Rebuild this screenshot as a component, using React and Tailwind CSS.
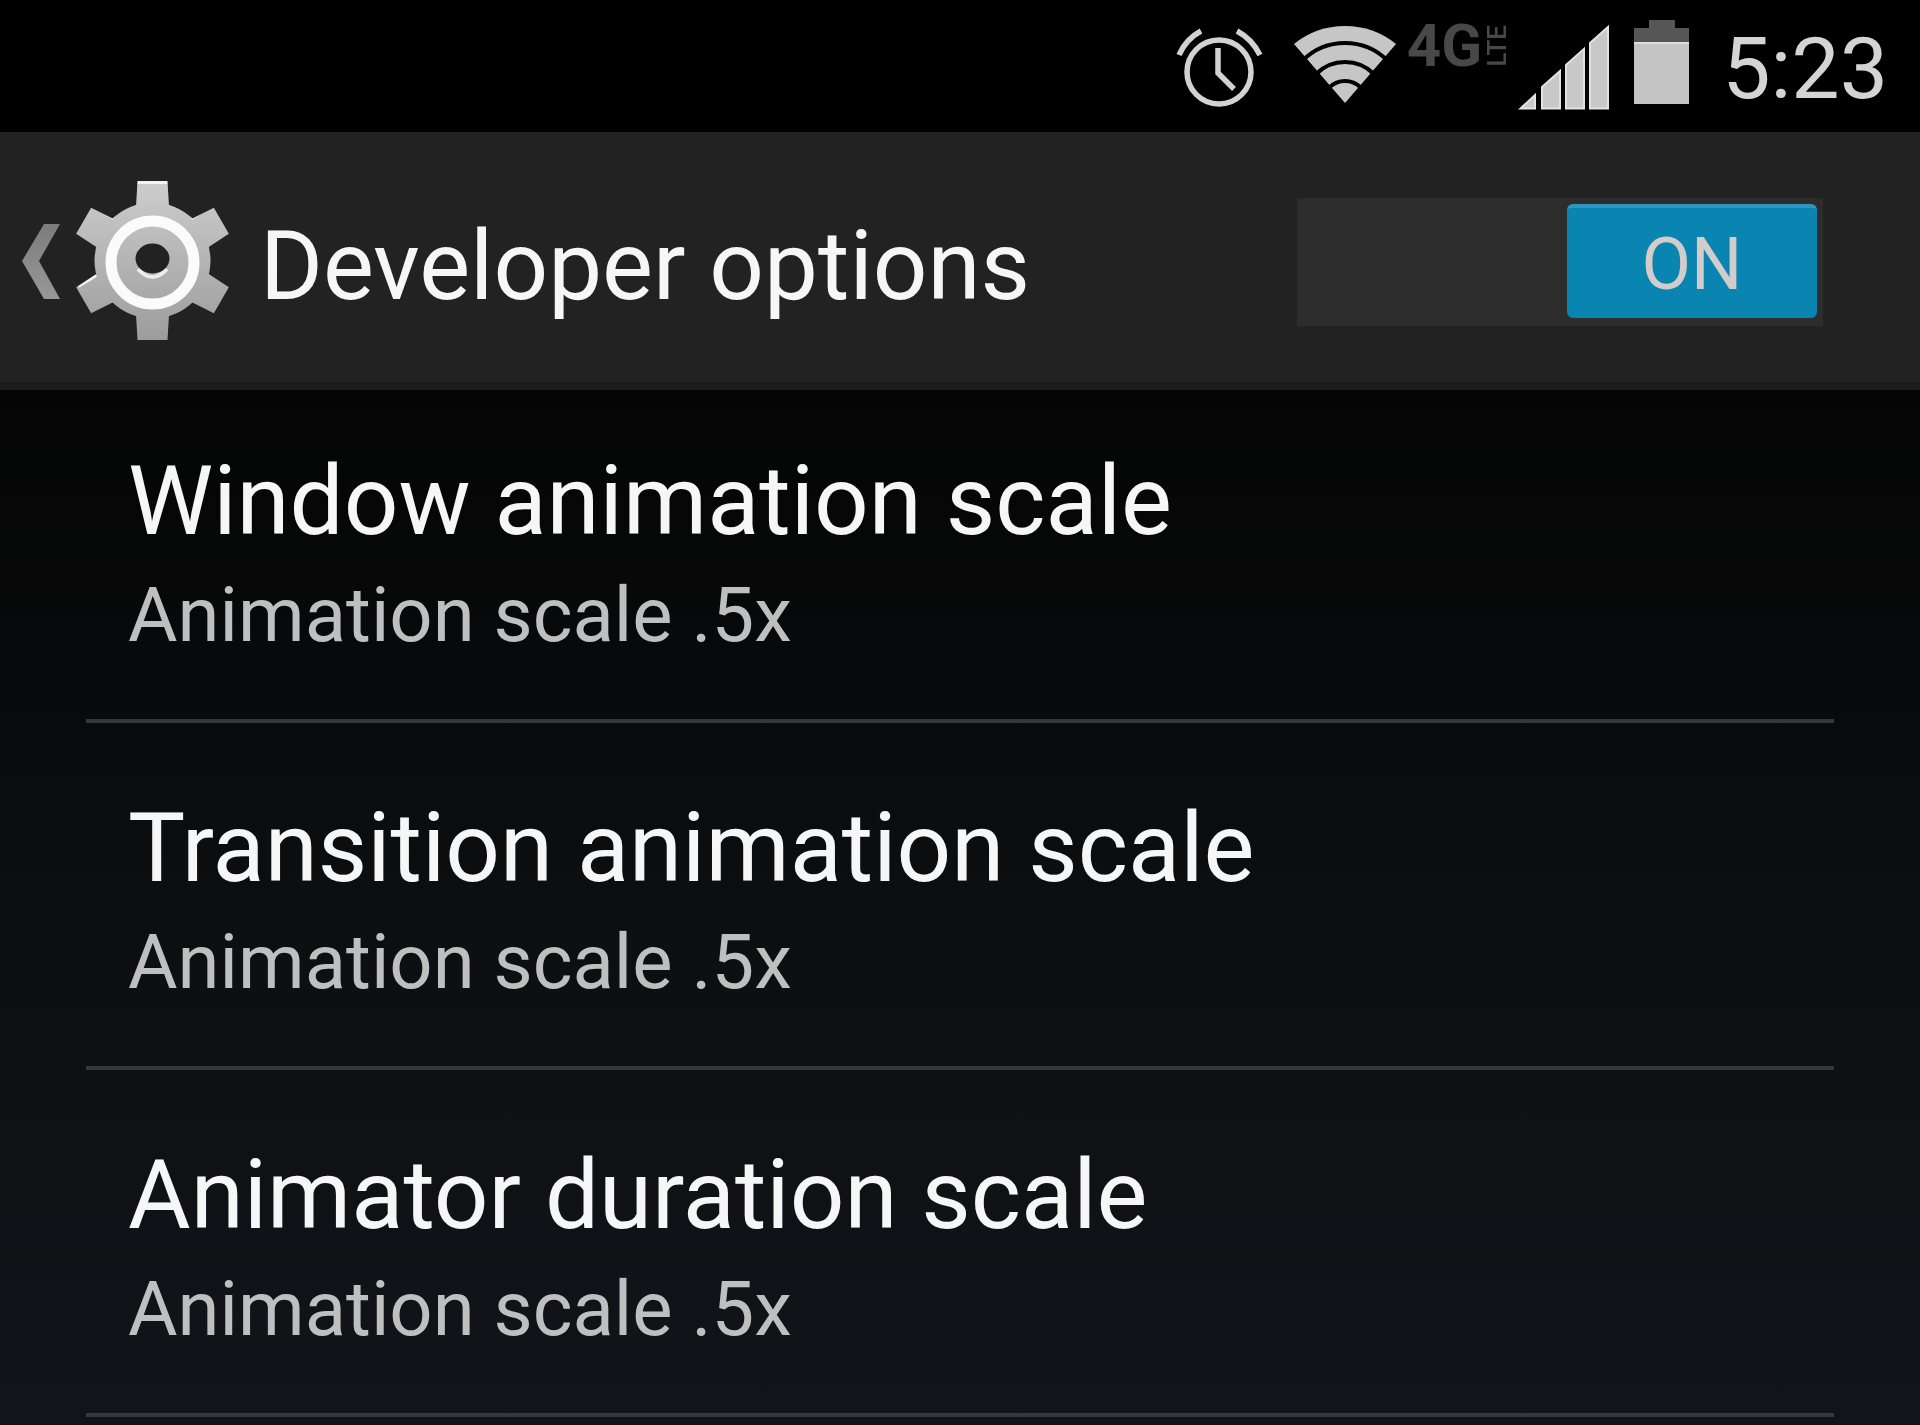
import { useState } from "react";

const SETTINGS = [
  { title: "Window animation scale", value: "Animation scale .5x" },
  { title: "Transition animation scale", value: "Animation scale .5x" },
  { title: "Animator duration scale", value: "Animation scale .5x" },
];

function AlarmIcon() {
  return (
    <svg className="w-[90px] h-[132px] shrink-0" viewBox="0 0 90 132" fill="none" stroke="#d2d2d2" strokeWidth="5.5" aria-hidden="true">
      <circle cx="44" cy="72" r="32" />
      <path d="M43 48V73L59 89" />
      <path d="M4 55Q11 39 26 31M62 31Q77 39 85 55" />
    </svg>
  );
}

function WifiIcon() {
  return (
    <svg className="w-[112px] h-[132px] shrink-0" viewBox="0 0 112 132" aria-hidden="true">
      <path d="M56 103L5 44Q27 26 56 26T107 44Z" fill="#c6c6c6" />
      <g fill="none" stroke="#000" strokeWidth="4">
        <circle cx="56" cy="103" r="60" />
        <circle cx="56" cy="103" r="41" />
        <circle cx="56" cy="103" r="22" />
      </g>
    </svg>
  );
}

function SignalIcon() {
  return (
    <svg className="w-[92px] h-[132px] shrink-0" viewBox="0 0 92 132" fill="#c8c8c8" stroke="#e2e2e2" strokeWidth="2" aria-hidden="true">
      <path d="M2.500 108.500L17 95V108.500Z" />
      <path d="M24 108.500V87L42 71V108.500Z" />
      <path d="M48 108.500V65L66 49V108.500Z" />
      <path d="M72 108.500V43L90 27V108.500Z" />
    </svg>
  );
}

function BatteryIcon() {
  return (
    <svg className="w-[56px] h-[132px] shrink-0" viewBox="0 0 56 132" aria-hidden="true">
      <path d="M15 20H41V28H55V42H0V28H15Z" fill="#565656" />
      <path d="M0 42H55V104H0Z" fill="#c4c4c4" />
      <path d="M0 42H55V44H0Z" fill="#dedede" />
    </svg>
  );
}

function GearIcon() {
  const teeth = [0, 60, 120, 180, 240, 300];
  return (
    <svg className="w-[230px] h-[258px] shrink-0" viewBox="0 133 230 258" aria-hidden="true">
      <defs>
        <linearGradient id="gear" gradientUnits="userSpaceOnUse" x1="0" y1="181" x2="0" y2="340">
          <stop offset="0" stopColor="#cdcdcd" />
          <stop offset="1" stopColor="#9c9c9c" />
        </linearGradient>
        <linearGradient id="chevron" x1="0" y1="0" x2="0" y2="1">
          <stop offset="0" stopColor="#7c7c7c" />
          <stop offset="1" stopColor="#989898" />
        </linearGradient>
        <mask id="gear-shape" maskUnits="userSpaceOnUse" x="60" y="170" width="180" height="180">
          <g fill="#fff">
            <circle cx="152.500" cy="260.500" r="58" />
            {teeth.map((a) => (
              <path key={a} d="M135.500 215L137.500 181H167.500L169.500 215Z" transform={`rotate(${a} 152.500 260.500)`} />
            ))}
          </g>
          <ellipse cx="152.500" cy="258.500" rx="17" ry="15" fill="#000" />
        </mask>
      </defs>
      <path d="M44 224H60L39 261L60 299H44L22 261Z" fill="url(#chevron)" />
      <g mask="url(#gear-shape)">
        <rect x="60" y="170" width="180" height="180" fill="url(#gear)" />
        <g stroke="#f4f4f4" strokeWidth="4" fill="none">
          <path d="M137 182H168" />
          <path d="M94 206L114 218M191 218L211 206M78 286L96 275" />
        </g>
        <path d="M138 269Q152.500 285 167 269" fill="none" stroke="#ececec" strokeWidth="4" />
      </g>
      <circle cx="152.500" cy="262.500" r="41.500" fill="none" stroke="#fbfbfb" strokeWidth="11" />
    </svg>
  );
}

function StatusBar() {
  return (
    <div className="flex h-[132px] justify-end bg-black pr-8">
      <AlarmIcon />
      <div className="ml-6 flex"><WifiIcon /></div>
      <div className="ml-1.5 mt-4 flex h-[60px] items-center font-bold text-[#484848]">
        <span className="text-[60px] leading-[60px]">4G</span>
        <span className="rotate-180 text-[26px] leading-[30px] font-medium [writing-mode:vertical-rl]">LTE</span>
      </div>
      <div className="ml-1.5 flex"><SignalIcon /></div>
      <div className="ml-6 flex"><BatteryIcon /></div>
      <time className="ml-8 text-[86px] leading-[138px] text-[#d4d4d4]">5:23</time>
    </div>
  );
}

function PowerSwitch() {
  const [on, setOn] = useState(true);
  return (
    <label className={`relative flex h-[128px] w-[526px] shrink-0 cursor-pointer bg-[#2d2d2d] p-[6px] ${on ? "justify-end" : "justify-start"}`}>
      <input
        type="checkbox"
        role="switch"
        aria-label="Developer options"
        checked={on}
        onChange={(e) => setOn(e.target.checked)}
        className="absolute inset-0 h-full w-full cursor-pointer appearance-none"
      />
      <span className={`flex h-[114px] w-[250px] items-center justify-center rounded-md border-t-4 pt-1 text-[72px] leading-[80px] ${on ? "border-[#2f97bf] bg-[#0a84b0] text-[#d2cdca]" : "border-[#5a5a5a] bg-[#4a4a4a] text-[#aaaaaa]"}`}>
        {on ? "ON" : "OFF"}
      </span>
    </label>
  );
}

export default function App() {
  return (
    <div className="flex min-h-screen flex-col bg-black font-['Roboto',sans-serif]">
      <StatusBar />
      <header className="flex h-[258px] items-center border-b-8 border-[#1b1b1b] bg-[#222222] pt-[10px] pr-[97px]">
        <button type="button" aria-label="Navigate up" className="flex shrink-0 cursor-pointer">
          <GearIcon />
        </button>
        <h1 className="ml-[30px] grow pt-2 text-[96px] leading-[112px] whitespace-nowrap text-[#f6f6f6]">Developer options</h1>
        <PowerSwitch />
      </header>
      <main className="grow bg-linear-to-b from-[#050505] via-[#0c0e10] to-[#13141a]">
        <ul className="px-[86px]">
          {SETTINGS.map((s) => (
            <li key={s.title} className="border-b-4 border-[#36373a] first:-mt-[14px]">
              <button type="button" className="flex w-full cursor-pointer flex-col items-start gap-1 px-[42px] pt-[65px] pb-[54px] text-left">
                <span className="text-[96px] leading-[120px] text-[#f6f6f6]">{s.title}</span>
                <span className="text-[76px] leading-[100px] text-[#bfbfbf]">{s.value}</span>
              </button>
            </li>
          ))}
        </ul>
      </main>
    </div>
  );
}
